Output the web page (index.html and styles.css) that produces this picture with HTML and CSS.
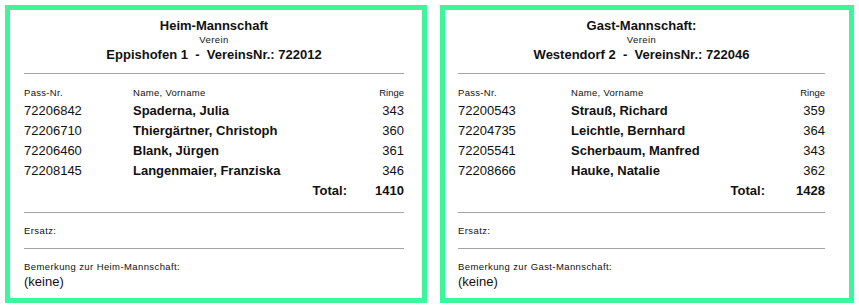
FILE: index.html
```html
<!DOCTYPE html>
<html lang="de">
<head>
<meta charset="utf-8">
<title>Mannschaften</title>
<link rel="stylesheet" href="styles.css">
</head>
<body>
<div class="page">
  <section class="team team-home">
    <div class="title">Heim-Mannschaft</div>
    <div class="sub">Verein</div>
    <div class="club">Eppishofen 1&nbsp; - &nbsp;VereinsNr.: 722012</div>
    <hr class="rule rule-top">
    <div class="grid">
      <div class="head">Pass-Nr.</div><div class="head">Name, Vorname</div><div class="head num">Ringe</div>
      <div class="cell first">72206842</div><div class="cell name first">Spaderna, Julia</div><div class="cell num first">343</div>
      <div class="cell">72206710</div><div class="cell name">Thiergärtner, Christoph</div><div class="cell num">360</div>
      <div class="cell">72206460</div><div class="cell name">Blank, Jürgen</div><div class="cell num">361</div>
      <div class="cell">72208145</div><div class="cell name">Langenmaier, Franziska</div><div class="cell num">346</div>
      <div class="cell"></div><div class="cell total-label">Total:</div><div class="cell num total">1410</div>
    </div>
    <hr class="rule rule-mid">
    <div class="label">Ersatz:</div>
    <hr class="rule rule-mid">
    <div class="label">Bemerkung zur Heim-Mannschaft:</div>
    <div class="note">(keine)</div>
  </section>
  <section class="team team-guest">
    <div class="title">Gast-Mannschaft:</div>
    <div class="sub">Verein</div>
    <div class="club">Westendorf 2&nbsp; - &nbsp;VereinsNr.: 722046</div>
    <hr class="rule rule-top">
    <div class="grid">
      <div class="head">Pass-Nr.</div><div class="head">Name, Vorname</div><div class="head num">Ringe</div>
      <div class="cell first">72200543</div><div class="cell name first">Strauß, Richard</div><div class="cell num first">359</div>
      <div class="cell">72204735</div><div class="cell name">Leichtle, Bernhard</div><div class="cell num">364</div>
      <div class="cell">72205541</div><div class="cell name">Scherbaum, Manfred</div><div class="cell num">343</div>
      <div class="cell">72208666</div><div class="cell name">Hauke, Natalie</div><div class="cell num">362</div>
      <div class="cell"></div><div class="cell total-label">Total:</div><div class="cell num total">1428</div>
    </div>
    <hr class="rule rule-mid">
    <div class="label">Ersatz:</div>
    <hr class="rule rule-mid">
    <div class="label">Bemerkung zur Gast-Mannschaft:</div>
    <div class="note">(keine)</div>
  </section>
</div>
</body>
</html>
```

FILE: styles.css
```css
html, body {
  margin: 0;
  padding: 0;
  background: #ffffff;
}

body {
  font-family: "Liberation Sans", Arial, sans-serif;
  color: #111111;
}

.page {
  display: flex;
  gap: 13px;
  padding: 5px 0 0 5px;
  align-items: flex-start;
}

.team {
  box-sizing: border-box;
  height: 298px;
  border: 5px solid #3df59a;
  padding-top: 8px;
  display: flex;
  flex-direction: column;
}

.team-home {
  width: 422px;
  padding-left: 14px;
  padding-right: 18px;
  --pass-col: 109px;
  --ringe-col: 57px;
}

.team-guest {
  width: 414px;
  padding-left: 13px;
  padding-right: 24px;
  --pass-col: 113px;
  --ringe-col: 60px;
}

.title {
  text-align: center;
  font-weight: bold;
  font-size: 13px;
  line-height: 16px;
}

.sub {
  text-align: center;
  font-size: 9.5px;
  letter-spacing: 0.4px;
  line-height: 12px;
}

.club {
  text-align: center;
  font-weight: bold;
  font-size: 13px;
  line-height: 18px;
}

.rule {
  border: 0;
  height: 1px;
  background: #a3a3a3;
  margin: 0;
  width: 100%;
}

.rule-top {
  margin-top: 9px;
}

.rule-mid {
  margin-top: 11px;
}

.grid {
  display: grid;
  grid-template-columns: var(--pass-col) 1fr var(--ringe-col);
  margin-top: 13px;
}

.head {
  font-size: 9.5px;
  letter-spacing: 0.3px;
  line-height: 12px;
  margin-bottom: 2px;
}

.cell {
  font-size: 13px;
  line-height: 20px;
  white-space: nowrap;
}

.name {
  font-weight: bold;
}

.num {
  text-align: right;
}

.head.num {
  letter-spacing: 0;
}

.total-label {
  font-weight: bold;
  text-align: right;
}

.total {
  font-weight: bold;
}

.label {
  font-size: 9.5px;
  letter-spacing: 0.4px;
  line-height: 12px;
  margin-top: 12px;
}

.label + .note {
  margin-top: 1px;
}

.note {
  font-size: 13px;
  line-height: 16px;
}
```
